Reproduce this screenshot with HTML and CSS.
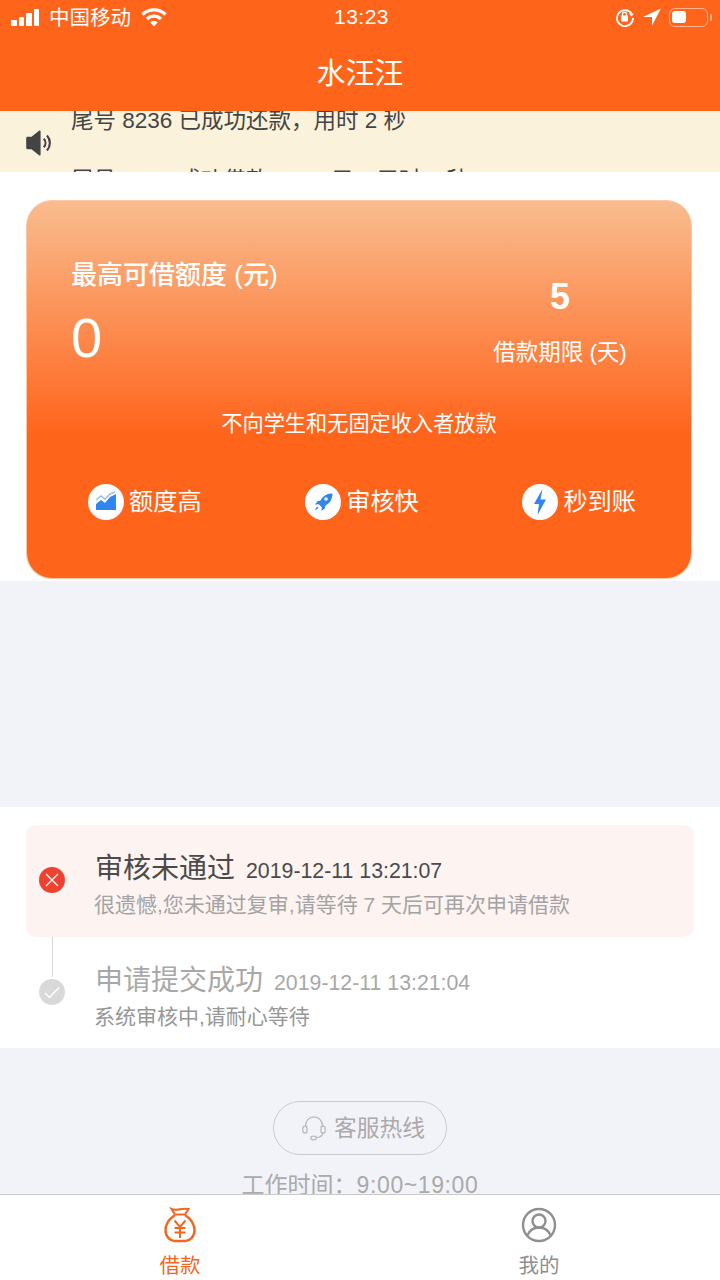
FILE: index.html
```html
<!DOCTYPE html>
<html lang="zh-CN">
<head>
    <meta charset="UTF-8">
    <meta name="viewport" content="width=device-width, initial-scale=1.0">
    <title>水汪汪</title>
    <link rel="stylesheet" href="styles.css">
</head>
<body>
    <div class="page">
        <!-- Orange header: status bar and title -->
        <header class="header">
            <div class="status-bar">
                <div class="status-left">
                    <div class="signal"><i class="s1"></i><i class="s2"></i><i class="s3"></i><i class="s4"></i></div>
                    <span class="carrier">中国移动</span>
                    <svg class="wifi" width="26" height="20" viewBox="0 0 26 20"><path d="M1.500 7.500a16.500 16.500 0 0 1 23 0" fill="none" stroke="#fff" stroke-width="3.400"/><path d="M6 12a10 10 0 0 1 14 0" fill="none" stroke="#fff" stroke-width="3.400"/><path d="M13 19.500l-3.800-4.200a5.300 5.300 0 0 1 7.600 0z" fill="#fff"/></svg>
                </div>
                <span class="clock">13:23</span>
                <div class="status-right">
                    <svg width="20" height="20" viewBox="0 0 20 20"><path d="M16.500 6.500A8 8 0 1 0 18 11" fill="none" stroke="#fff" stroke-width="1.800"/><path d="M14 6.500h5l-2.500 3z" fill="#fff"/><rect x="6" y="8.500" width="7" height="6" rx="1" fill="#fff"/><path d="M7.500 9V7.200a2 2 0 0 1 4 0V9" fill="none" stroke="#fff" stroke-width="1.300"/></svg>
                    <svg width="18" height="18" viewBox="0 0 18 18"><path d="M18 .5L0 9h9v8.500z" fill="#fff"/></svg>
                    <div class="battery"><i></i></div>
                    <span class="battery-tip"></span>
                </div>
            </div>
            <h1 class="title">水汪汪</h1>
        </header>

        <main class="content">
            <!-- Scrolling notice -->
            <section class="notice">
                <svg class="notice-icon" width="30" height="32" viewBox="0 0 28 30"><path d="M2 10.500c0-.8.500-1.300 1.300-1.300H7L14 3.500c.8-.6 1.500-.2 1.500.8v21.400c0 1-.7 1.400-1.500.8l-7-5.700H3.300c-.8 0-1.300-.5-1.300-1.300z" fill="#444"/><path d="M18.500 11a6 6 0 0 1 0 8M21.500 8a10.500 10.500 0 0 1 0 14" fill="none" stroke="#444" stroke-width="2"/></svg>
                <div class="notice-list">
                    <p>尾号 8236 已成功还款，用时 2 秒</p>
                    <p>尾号 6152 成功借款 5000 元，用时 1 秒</p>
                </div>
            </section>

            <section class="card-wrap">
                <div class="card">
                    <div class="card-top">
                        <div class="amount">
                            <div class="amount-label">最高可借额度 (元)</div>
                            <div class="amount-value">0</div>
                        </div>
                        <div class="term">
                            <div class="term-value">5</div>
                            <div class="term-label">借款期限 (天)</div>
                        </div>
                    </div>
                    <p class="card-note">不向学生和无固定收入者放款</p>
                    <div class="features">
                        <div class="feature">
                            <span class="feature-icon">
                                <svg width="22" height="22" viewBox="0 0 22 22"><path d="M1 13l5-4 4 3 5-6 6-3v16H1z" fill="#2f86f0"/><path d="M1 9l5-4 4 3 5-5 5-2" fill="none" stroke="#8fbdf5" stroke-width="1.400"/></svg>
                            </span>
                            <span>额度高</span>
                        </div>
                        <div class="feature">
                            <span class="feature-icon">
                                <svg width="22" height="22" viewBox="0 0 22 22"><path d="M19.500 2.500c-5 .3-8.700 2.500-11 7l-3 .8-2.500 3.200 3.800-.3 3 3-.3 3.800 3.200-2.500.8-3c4.500-2.300 6.700-6 7-12z" fill="#2f86f0"/><circle cx="14" cy="8" r="1.800" fill="#fff"/><path d="M5 15.500l-2.500 4 4-2.500z" fill="#2f86f0"/></svg>
                            </span>
                            <span>审核快</span>
                        </div>
                        <div class="feature">
                            <span class="feature-icon">
                                <svg width="22" height="28" viewBox="0 0 22 28"><path d="M13.500 1L5 16h5l-1.500 11L17 11.500h-5.500z" fill="#2f86f0"/></svg>
                            </span>
                            <span>秒到账</span>
                        </div>
                    </div>
                </div>
            </section>

            <div class="spacer"></div>

            <!-- Review progress -->
            <section class="progress">
                <div class="step step-failed">
                    <span class="step-icon icon-failed">
                        <svg width="14" height="14" viewBox="0 0 14 14"><path d="M1 1l12 12M13 1L1 13" stroke="#fff" stroke-width="1.300" fill="none"/></svg>
                    </span>
                    <div class="step-body">
                        <div class="step-head"><span class="step-title">审核未通过</span><span class="step-time">2019-12-11 13:21:07</span></div>
                        <div class="step-desc">很遗憾,您未通过复审,请等待 7 天后可再次申请借款</div>
                    </div>
                </div>
                <div class="step step-done">
                    <span class="step-line"></span>
                    <span class="step-icon icon-done">
                        <svg width="16" height="13" viewBox="0 0 16 13"><path d="M1 7l4.500 4.500L15 1.500" stroke="#fff" stroke-width="1.500" fill="none"/></svg>
                    </span>
                    <div class="step-body">
                        <div class="step-head"><span class="step-title">申请提交成功</span><span class="step-time">2019-12-11 13:21:04</span></div>
                        <div class="step-desc">系统审核中,请耐心等待</div>
                    </div>
                </div>
            </section>

            <section class="service">
                <div class="hotline">
                    <svg width="26" height="26" viewBox="0 0 28 28"><path d="M5 13v-2a9 9 0 0 1 18 0v2" fill="none" stroke="#b5b5b5" stroke-width="1.300"/><rect x="2" y="12" width="4.500" height="7.500" rx="2.200" fill="none" stroke="#b5b5b5" stroke-width="1.300"/><rect x="21.500" y="12" width="4.500" height="7.500" rx="2.200" fill="none" stroke="#b5b5b5" stroke-width="1.300"/><path d="M23.500 19.500c-.5 3-3 4.500-7 5" fill="none" stroke="#b5b5b5" stroke-width="1.300"/><ellipse cx="13.500" cy="24.800" rx="3" ry="2" fill="none" stroke="#b5b5b5" stroke-width="1.300"/></svg>
                    <span class="hotline-text">客服热线</span>
                </div>
                <div class="work-time">工作时间：<span class="work-hours">9:00~19:00</span></div>
            </section>
        </main>

        <nav class="tabbar">
            <div class="tab tab-active">
                <svg width="32" height="36" viewBox="0 0 32 36"><path d="M7.500 2c3 1.200 5.500 1 8.500.3s5.500-.6 8.500-.3l-3.500 5.500H11z" fill="none" stroke="#f4661f" stroke-width="2"/><path d="M11 8C5 12 1.500 17 1.500 23c0 7 5 11 9 11h11c4 0 9-4 9-11 0-6-3.500-11-9.500-15" fill="none" stroke="#f4661f" stroke-width="2.400"/><path d="M10.500 13.500L16 20l5.500-6.500M10.500 21h11M10.500 25.500h11M16 20v11" fill="none" stroke="#f4661f" stroke-width="2"/></svg>
                <span>借款</span>
            </div>
            <div class="tab">
                <svg width="36" height="36" viewBox="0 0 36 36"><circle cx="18" cy="18" r="16" fill="none" stroke="#8f8f8f" stroke-width="2.400"/><circle cx="18" cy="14" r="6.500" fill="none" stroke="#8f8f8f" stroke-width="2.400"/><path d="M6 29c2.500-6 7-8.500 12-8.500s9.500 2.500 12 8.500" fill="none" stroke="#8f8f8f" stroke-width="2.400"/></svg>
                <span>我的</span>
            </div>
        </nav>
    </div>
</body>
</html>
```

FILE: styles.css
```css
* {
    box-sizing: border-box;
}
html, body {
    margin: 0;
    padding: 0;
}
body {
    font-family: "Liberation Sans", "Noto Sans CJK SC", sans-serif;
    background-color: #f2f3f8;
}
p, h1 {
    margin: 0;
    font-weight: normal;
}
.page {
    width: 720px;
    height: 1280px;
    display: flex;
    flex-direction: column;
    overflow: hidden;
}

/* header */
.header {
    height: 111px;
    flex-shrink: 0;
    background-color: #ff641b;
    color: #fff;
}
.status-bar {
    height: 34px;
    display: grid;
    grid-template-columns: 1fr auto 1fr;
    align-items: center;
    padding: 0 8px 0 11px;
}
.status-left, .status-right {
    display: flex;
    align-items: center;
}
.status-right {
    justify-content: flex-end;
    gap: 8px;
}
.signal {
    display: flex;
    align-items: flex-end;
    gap: 2px;
    height: 17px;
}
.signal i {
    width: 5.500px;
    background-color: #fff;
    border-radius: 1px;
}
.s1 { height: 6px; }
.s2 { height: 9px; }
.s3 { height: 13px; }
.s4 { height: 17px; }
.carrier {
    font-size: 20.500px;
    line-height: 28px;
    margin-left: 10px;
    margin-right: 10px;
    padding-top: 2px;
}
.clock {
    font-size: 21px;
    letter-spacing: 0.500px;
}
.battery {
    width: 39px;
    height: 19px;
    border: 1.500px solid #ffb48f;
    border-radius: 6px;
    padding: 2px;
    margin-right: -6px;
}
.battery i {
    display: block;
    width: 14px;
    height: 12px;
    background-color: #fff;
    border-radius: 3px;
}
.battery-tip {
    width: 2px;
    height: 7px;
    background-color: #ffb48f;
    border-radius: 1px;
}
.title {
    font-size: 29px;
    line-height: 40px;
    margin-top: 20px;
    text-align: center;
}

.content {
    flex: 1;
    min-height: 0;
    overflow: hidden;
}

/* notice */
.notice {
    height: 61px;
    background-color: #fbf2dc;
    display: flex;
    align-items: flex-start;
    overflow: hidden;
}
.notice-icon {
    margin: 16px 0 0 24px;
    flex-shrink: 0;
}
.notice-list {
    margin: -20px 0 0 17px;
    font-size: 22.500px;
    line-height: 60px;
    color: #444;
}

/* loan card */
.card-wrap {
    height: 409px;
    background-color: #fff;
    padding: 28px 28px 0 26px;
}
.card {
    height: 379px;
    border-radius: 26px;
    border: 1px solid #fbc7a5;
    background: linear-gradient(#f9bc8f 0, #ff641b 62%);
    color: #fff;
    padding: 0 44px;
}
.card-top {
    height: 196px;
    display: flex;
    justify-content: space-between;
}
.amount-label {
    font-size: 26px;
    font-weight: 500;
    line-height: 34px;
    margin-top: 57px;
}
.amount-value {
    font-size: 56px;
    line-height: 60px;
    margin-top: 16px;
}
.term {
    width: 134px;
    margin-right: 20px;
    text-align: center;
}
.term-value {
    font-weight: bold;
    font-size: 36px;
    line-height: 42px;
    margin-top: 75px;
}
.term-label {
    font-size: 22.500px;
    line-height: 32px;
    margin-top: 19px;
}
.card-note {
    font-size: 21.200px;
    line-height: 30px;
    margin-top: 12px;
    text-align: center;
}
.features {
    display: flex;
    justify-content: space-between;
    margin: 45px 11px 0 17px;
}
.feature {
    display: flex;
    align-items: center;
    gap: 5px;
    font-size: 24.200px;
    line-height: 36px;
}
.feature-icon {
    width: 36px;
    height: 36px;
    border-radius: 50%;
    background-color: #fff;
    display: flex;
    align-items: center;
    justify-content: center;
}

.spacer {
    height: 226px;
}

/* review steps */
.progress {
    height: 241px;
    background-color: #fff;
    padding: 18px 26px 0;
}
.step {
    position: relative;
    width: 668px;
    height: 112px;
    display: flex;
    align-items: center;
    padding-left: 13px;
    border-radius: 10px;
}
.step-failed {
    background-color: #fdf3f1;
}
.step-icon {
    width: 26px;
    height: 26px;
    margin-top: -2px;
    border-radius: 50%;
    display: flex;
    align-items: center;
    justify-content: center;
    flex-shrink: 0;
}
.icon-failed {
    background-color: #ee4130;
}
.icon-done {
    background-color: #d9d9d9;
}
.step-line {
    position: absolute;
    left: 26px;
    top: 0;
    width: 1px;
    height: 40px;
    background-color: #d9d9d9;
}
.step-body {
    margin-left: 30px;
    padding-top: 9px;
}
.step-head {
    display: flex;
    align-items: baseline;
    gap: 11px;
}
.step-title {
    font-size: 28px;
    line-height: 36px;
    color: #4a4a4a;
}
.step-time {
    font-size: 21.300px;
    color: #4a4a4a;
}
.step-desc {
    font-size: 21px;
    line-height: 30px;
    color: #a3a3a3;
    margin: 3px 0 0 -1px;
}
.step-done .step-title, .step-done .step-time {
    color: #a8a8a8;
}
.step-done .step-desc {
    color: #979797;
}

/* customer service */
.service {
    padding-top: 53px;
    text-align: center;
    color: #aaa;
}
.hotline {
    width: 174px;
    height: 54px;
    margin: 0 auto;
    padding-left: 6px;
    border: 1.500px solid #c9c9c9;
    border-radius: 27px;
    display: flex;
    align-items: center;
    justify-content: center;
    gap: 7px;
    font-size: 22.750px;
}
.hotline-text {
    padding-bottom: 3px;
}
.work-time {
    font-size: 23px;
    line-height: 30px;
    margin-top: 15px;
}
.work-hours {
    letter-spacing: 0.600px;
}

/* bottom tabs */
.tabbar {
    height: 86px;
    flex-shrink: 0;
    background-color: #fff;
    border-top: 1px solid #c9c9c9;
    display: grid;
    grid-template-columns: 1fr 1fr;
}
.tab {
    display: flex;
    flex-direction: column;
    align-items: center;
    padding-top: 12px;
    font-size: 20.500px;
    line-height: 28px;
    color: #8f8f8f;
    gap: 9px;
}
.tab:last-child {
    padding-right: 2px;
}
.tab-active {
    color: #f4661f;
}
```
